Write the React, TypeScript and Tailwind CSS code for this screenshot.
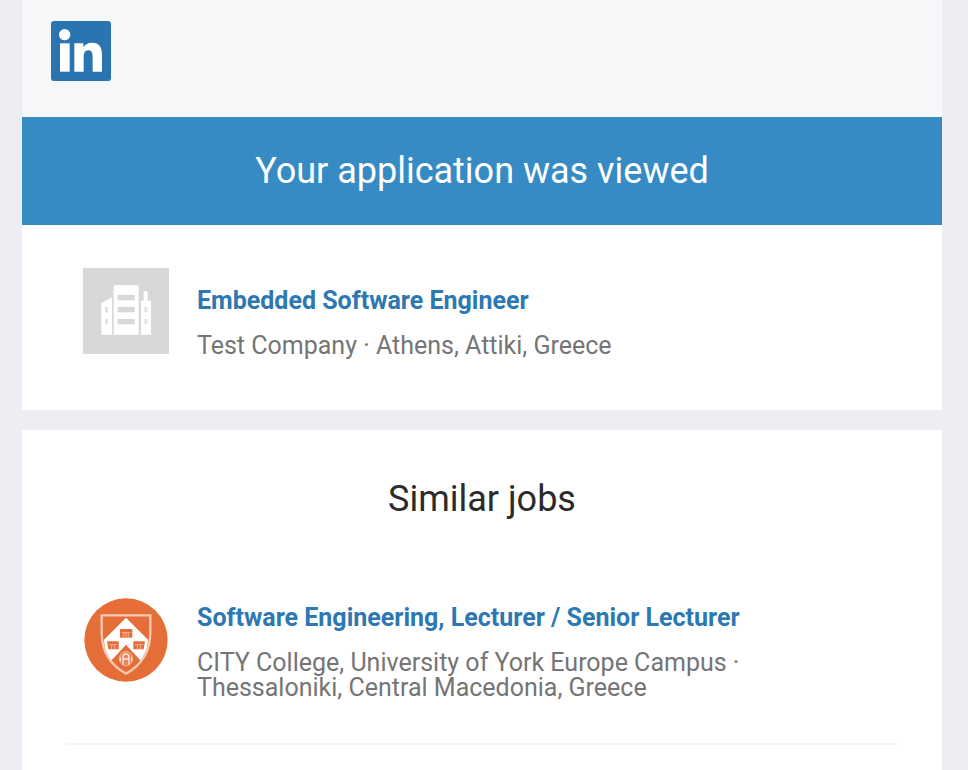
import React from 'react';

type Job = {
  title: string;
  meta: string;
  icon: React.ReactNode;
};

const LinkedInLogo = () => (
  <svg viewBox="0 0 180 180" className="size-15" role="img" aria-label="LinkedIn">
    <rect width="180" height="180" rx="10" fill="#2a74af" />
    <circle cx="41" cy="41" r="17" fill="#fff" />
    <rect x="27" y="67" width="29" height="85" fill="#fff" />
    <path
      d="M70 67h27v12c5-9 14-14 26-14 23 0 30 14 30 38v49h-28v-43c0-12-2-21-13-21s-14 9-14 20v44H70z"
      fill="#fff"
    />
  </svg>
);

const CompanyIcon = () => (
  <svg viewBox="0 0 258 258" className="size-[86px] shrink-0" aria-hidden="true">
    <rect width="258" height="258" fill="#d8d8d8" />
    <g fill="#fff">
      <path d="M55 105l32-17v112H55z" />
      <path d="M99 51h62q6 0 6 7v142H92V58q0-7 7-7z" />
      <path d="M174 98h8V74q0-6 6-6t6 6v24h10v102h-30z" />
    </g>
    <g fill="#d8d8d8">
      <rect x="104" y="81" width="51" height="16" />
      <rect x="104" y="117" width="51" height="16" />
      <rect x="104" y="153" width="51" height="16" />
    </g>
    <g fill="#e2e2e2">
      <rect x="66" y="117" width="9" height="16" />
      <rect x="66" y="153" width="9" height="16" />
      <rect x="184" y="117" width="9" height="16" />
      <rect x="184" y="153" width="9" height="16" />
    </g>
  </svg>
);

const CollegeCrest = () => (
  <svg viewBox="41 35 258 258" className="size-[86px] shrink-0" aria-hidden="true">
    <circle cx="170" cy="164" r="125" fill="#e56e38" />
    <path
      d="M97 90h146v51c0 58-25 98-73 124-48-26-73-66-73-124z"
      fill="none"
      stroke="#f6c9b3"
      strokeWidth="7"
    />
    {/* Chevron */}
    <path d="M170 97l66 66c-1 24-9 44-23 62l-43-47-43 47c-14-18-22-38-23-62z" fill="#fff" />
    {/* Three halls */}
    <g fill="#e56e38">
      <path d="M152 131h37v26h-37z" />
      <path d="M113 168h35v24h-31z" />
      <path d="M192 168h35l-4 24h-31z" />
    </g>
    <g fill="none" stroke="#f3b091" strokeWidth="3">
      <path d="M157 142h27M163 143v13M170 143v13M177 143v13" />
      <path d="M119 178h24M127 179v12M136 179v12" />
      <path d="M197 178h24M204 179v12M213 179v12" />
    </g>
    {/* Badge at the foot of the shield */}
    <path
      d="M157 236c-9-9-8-24 0-32 8-7 18-7 26 0 8 8 9 23 0 32-8 7-18 7-26 0z"
      fill="#ea8658"
      stroke="#f3b598"
      strokeWidth="3"
    />
    <path
      d="M161 238v-23c0-12 18-12 18 0v23M162 221h16M153 216v12M187 216v12"
      fill="none"
      stroke="#fce9df"
      strokeWidth="4"
    />
  </svg>
);

const JobRow = ({ title, meta, icon }: Job) => (
  <article className="flex items-center gap-7">
    {icon}
    <div className="max-w-[560px] pt-[22px]">
      <h3 className="text-[25px] leading-8 font-bold text-[#2d78b3]">
        <a href="#job">{title}</a>
      </h3>
      <p className="mt-4 text-[25px] leading-[25px] text-[#757575]">{meta}</p>
    </div>
  </article>
);

const viewedJob: Job = {
  title: 'Embedded Software Engineer',
  meta: 'Test Company · Athens, Attiki, Greece',
  icon: <CompanyIcon />,
};

const similarJobs: Job[] = [
  {
    title: 'Software Engineering, Lecturer / Senior Lecturer',
    meta: 'CITY College, University of York Europe Campus · Thessaloniki, Central Macedonia, Greece',
    icon: <CollegeCrest />,
  },
];

export default function App() {
  return (
    <div className="min-h-screen bg-[#edeef3] pr-[26px] pl-[22px] font-[Roboto,sans-serif]">
      <header className="bg-[#f6f7f9] px-[29px] pt-[21px] pb-9">
        <a href="#home" className="inline-block align-top">
          <LinkedInLogo />
        </a>
      </header>

      <main>
        <div className="bg-[#368bc4] py-8 text-center">
          <h1 className="text-4xl leading-11 text-white">Your application was viewed</h1>
        </div>

        <section className="bg-white px-[61px] pt-[38px] pb-[52px]">
          <JobRow {...viewedJob} />
        </section>

        <section className="mt-5 min-h-[340px] bg-white px-[43px] pt-12">
          <h2 className="text-center text-4xl leading-[42px] text-[#2b2b2b]">Similar jobs</h2>
          <div className="pt-15">
            {similarJobs.map((job) => (
              <div key={job.title} className="border-b-2 border-[#f5f5f5] px-[18px] pb-[43px]">
                <JobRow {...job} />
              </div>
            ))}
          </div>
        </section>
      </main>
    </div>
  );
}
